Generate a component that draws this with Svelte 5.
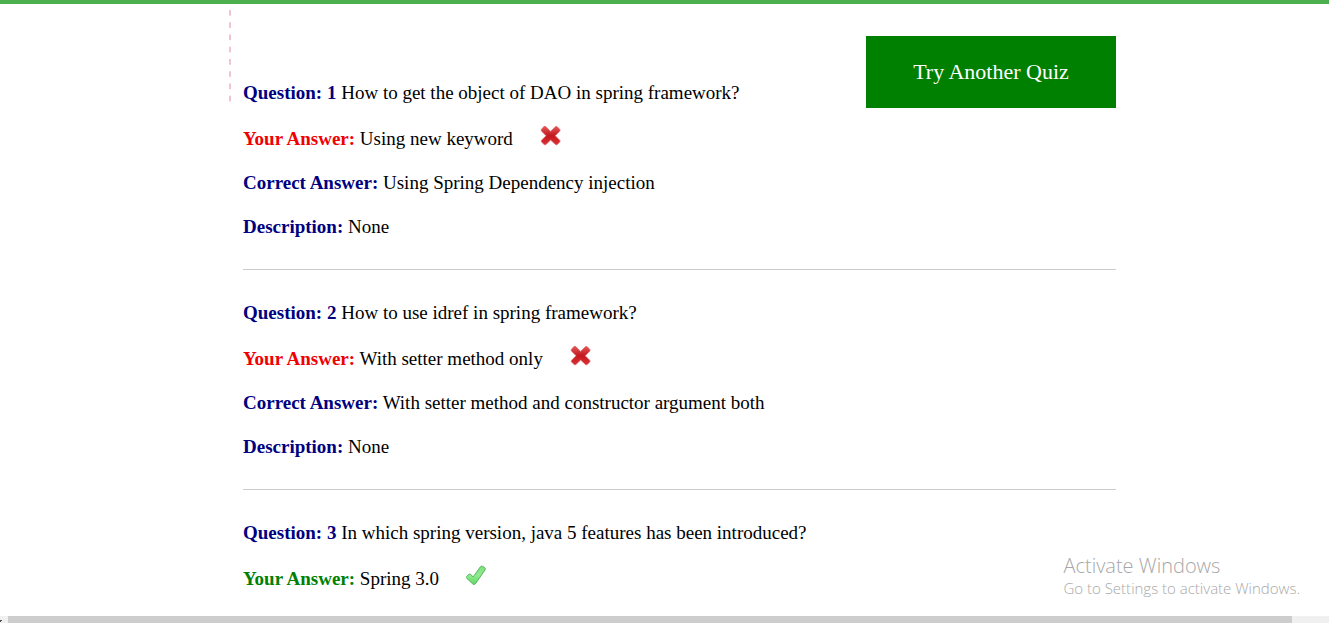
<script>
  const questions = [
    {
      text: 'How to get the object of DAO in spring framework?',
      answer: 'Using new keyword',
      right: false,
      correct: 'Using Spring Dependency injection',
      description: 'None'
    },
    {
      text: 'How to use idref in spring framework?',
      answer: 'With setter method only',
      right: false,
      correct: 'With setter method and constructor argument both',
      description: 'None'
    },
    {
      text: 'In which spring version, java 5 features has been introduced?',
      answer: 'Spring 3.0',
      right: true
    }
  ];
</script>

<div class="page">
  <div class="topbar"></div>
  <main>
    <div class="rail"></div>
    <div class="content">
      <button type="button">Try Another Quiz</button>
      <div class="list">
        {#each questions as q, i}
          <section>
            <p><b>Question: {i + 1}</b> {q.text}</p>
            <p class="given">
              <span><b class={q.right ? 'good' : 'bad'}>Your Answer:</b> {q.answer}</span>
              {#if q.right}
                <svg viewBox="0 0 22 22" aria-hidden="true">
                  <defs>
                    <linearGradient id="tick" x1="0" y1="0" x2="0" y2="1">
                      <stop offset="0" stop-color="#7fdc80" />
                      <stop offset="0.5" stop-color="#8fec8e" />
                      <stop offset="1" stop-color="#62d668" />
                    </linearGradient>
                  </defs>
                  <path d="M.7 11.4 2.8 9.4Q3.8 8.6 4.8 9.6L7.2 11.9 14.4 1.8Q15.4 .6 16.6 1.4L18.6 2.6Q19.8 3.6 19 5L9.4 18.8Q8 20.2 6.6 18.8L.9 13.4Q0 12.4 .7 11.4Z" fill="url(#tick)" stroke="#55b45a" stroke-width="1" />
                </svg>
              {:else}
                <svg viewBox="0 0 22 22" aria-hidden="true">
                  <defs>
                    <linearGradient id="cross{i}" x1="0" y1="0" x2="0" y2="1">
                      <stop offset="0" stop-color="#e4575a" />
                      <stop offset="0.5" stop-color="#c4181e" />
                      <stop offset="1" stop-color="#dc3034" />
                    </linearGradient>
                  </defs>
                  <path d="M1.4 4.2 4 1.6Q5 .9 6 1.8L10.6 6.4 15.4 1.8Q16.4 1 17.2 1.7L19.8 4.4Q20.4 5.3 19.7 6.2L15.2 10.7 19.7 15.2Q20.4 16.2 19.8 17L17.2 19.5Q16.4 20.2 15.4 19.4L10.6 15 6 19.4Q5 20.2 4.2 19.5L1.5 17Q.9 16.2 1.6 15.2L6.1 10.7 1.6 6.2Q.8 5.2 1.4 4.2Z" fill="url(#cross{i})" stroke="#d9686b" stroke-width="0.8" />
                </svg>
              {/if}
            </p>
            {#if q.correct}
              <p><b>Correct Answer:</b> {q.correct}</p>
              <p><b>Description:</b> {q.description}</p>
              <hr />
            {/if}
          </section>
        {/each}
      </div>
    </div>
  </main>
  <div class="scroll">
    <svg class="arrow" viewBox="0 0 8 7" aria-hidden="true">
      <path d="M0 4H2V5H1V6H0Z" fill="#505050" />
    </svg>
    <div class="thumb"></div>
  </div>
  <aside>
    <div class="title">Activate Windows</div>
    <div class="hint">Go to Settings to activate Windows.</div>
  </aside>
</div>

<style>
  :global(body) {
    margin: 0;
    background: #fff;
  }
  .page {
    position: relative;
    display: flex;
    flex-direction: column;
    min-height: 100vh;
    font: 19px/44px "Liberation Serif", "Times New Roman", serif;
    color: #000;
  }
  .topbar {
    height: 4px;
    background: #4caf50;
  }
  main {
    flex: 1;
    display: flex;
    gap: 12px;
    margin: 0 213px 0 229px;
  }
  .rail {
    width: 2px;
    height: 98px;
    margin-top: 6px;
    background: linear-gradient(#f0c4d0 50%, transparent 50%) 0 0 / 2px 12px round;
  }
  .content {
    flex: 1;
  }
  button {
    float: right;
    width: 250px;
    height: 72px;
    margin-top: 32px;
    padding: 0;
    border: 0;
    background: #008000;
    color: #fff;
    font: 22px "Liberation Serif", "Times New Roman", serif;
  }
  .list {
    padding-top: 67px;
  }
  p {
    margin: 0;
  }
  b {
    color: #000080;
  }
  .bad {
    color: #f00000;
  }
  .good {
    color: #008000;
  }
  .given {
    display: flex;
    gap: 27px;
    padding-top: 2px;
  }
  .given svg {
    width: 22px;
    height: 22px;
    margin-top: 8px;
  }
  hr {
    height: 1px;
    margin: 20px 0 21px;
    border: 0;
    background: #ccc;
  }
  .scroll {
    display: flex;
    height: 7px;
    padding-right: 37px;
    background: #f0f0f0;
  }
  .arrow {
    width: 8px;
    height: 7px;
  }
  .thumb {
    flex: 1;
    background: #cdcdcd;
  }
  aside {
    position: absolute;
    right: 29px;
    bottom: 24px;
    color: #a8a8a8;
    font-family: "Segoe UI", "Open Sans", sans-serif;
    font-weight: 300;
  }
  .title {
    font-size: 20px;
    line-height: 23px;
  }
  .hint {
    font-size: 15px;
    line-height: 22px;
  }
</style>
